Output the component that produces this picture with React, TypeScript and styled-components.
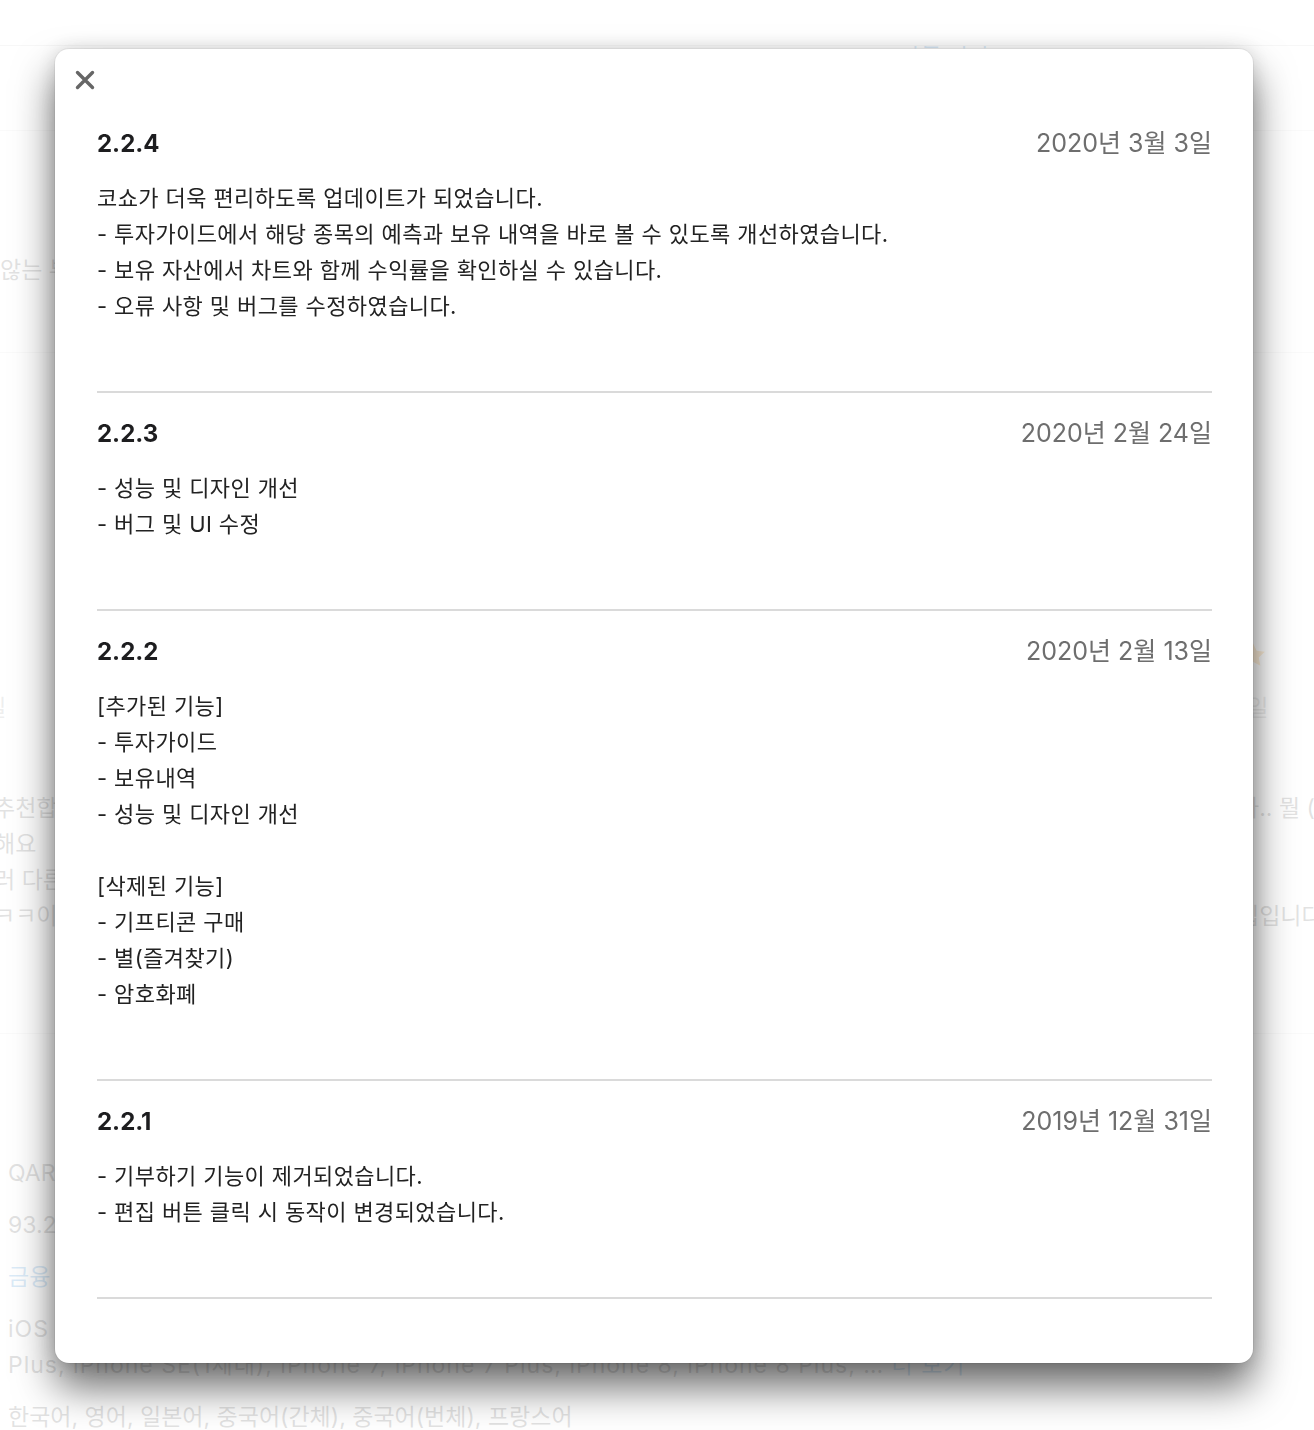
import React from "react";
import styled, { createGlobalStyle } from "styled-components";

const GlobalStyle = createGlobalStyle`
  html, body { margin: 0; padding: 0; background: #fff; }
  body { overflow: hidden; }
  * { box-sizing: border-box; }
`;

/* ---------- background page (dimmed) ---------- */

const Page = styled.div`
  width: 1314px;
  height: 1430px;
  overflow: hidden;
  font-family: Inter, "Noto Sans CJK KR", sans-serif;
  font-size: 23px;
  line-height: 36px;
  color: #333;
`;

const TopBar = styled.header`
  position: relative;
  z-index: 1;
  height: 46px;
  background: #fff;
  border-bottom: 1px solid #c8c8c8;
`;

const VersionStrip = styled.div`
  height: 85px;
  border-bottom: 1px solid #d8d8d8;
  display: flex;
  padding-left: 898px;
`;

const BlueLink = styled.a`
  color: #0070c9;
  text-decoration: none;
`;

const VersionLink = styled(BlueLink)`
  margin-top: -26px;
  height: 36px;
`;

const NoticeBlock = styled.div`
  height: 222px;
  padding-top: 121px;
  border-bottom: 1px solid #d8d8d8;
`;

const ReviewsRow = styled.section`
  height: 681px;
  overflow: hidden;
  border-bottom: 1px solid #d8d8d8;
`;

const ReviewTrack = styled.div`
  display: flex;
  gap: 22px;
  margin-left: -6px;
`;

const ReviewCard = styled.article`
  width: 600px;
  flex-shrink: 0;
  padding-top: 287px;
`;

const StarRow = styled.div<{ $align: string }>`
  height: 30px;
  display: flex;
  gap: 60px;
  justify-content: ${(p) => p.$align};
`;

const DateLine = styled.div<{ $offset: number }>`
  margin-top: 20px;
  height: 36px;
  margin-left: ${(p) => p.$offset}px;
  color: #888;
`;

const ReviewText = styled.p`
  margin: 64px 0 0;
  white-space: pre-line;
`;

const InfoSection = styled.section`
  padding: 121px 0 0 8px;
`;

const InfoRow = styled.div<{ $tracking?: number }>`
  margin-bottom: 16px;
  white-space: nowrap;
  letter-spacing: ${(p) => p.$tracking ?? 0}px;
`;

const Star = () => (
  <svg width="30" height="30" viewBox="0 0 24 24">
    <path
      d="M12 2.5l2.9 6.1 6.6.8-4.9 4.6 1.3 6.6L12 17.3l-5.9 3.3 1.3-6.6-4.9-4.6 6.6-.8z"
      fill="#ff9500"
    />
  </svg>
);

const Stars = () => (
  <>
    <Star />
    <Star />
    <Star />
  </>
);

/* ---------- modal ---------- */

const Overlay = styled.div`
  position: fixed;
  inset: 0;
  z-index: 10;
  background: rgba(255, 255, 255, 0.86);
  display: flex;
  align-items: flex-start;
  padding: 49px 0 0 55px;
`;

const Modal = styled.div`
  width: 1198px;
  background: #fff;
  border-radius: 14px;
  padding-bottom: 64px;
  box-shadow: 0 0 0 1px rgba(0, 0, 0, 0.05), 0 24px 40px rgba(0, 0, 0, 0.58),
    0 0 18px rgba(0, 0, 0, 0.12);
  font-family: Inter, "Noto Sans CJK KR", sans-serif;
  color: #222;
`;

const ModalHeader = styled.div`
  display: flex;
  padding: 13px 0 5px 12px;
`;

const CloseButton = styled.button`
  width: 36px;
  height: 36px;
  padding: 0;
  border: 0;
  background: transparent;
  display: flex;
  align-items: center;
  justify-content: center;
  cursor: pointer;
`;

const NotesList = styled.div`
  padding: 0 41px 0 42px;
`;

const Release = styled.section`
  padding: 25px 0 67px;
  border-bottom: 2px solid #dadada;
`;

const ReleaseHead = styled.div`
  display: flex;
  justify-content: space-between;
  align-items: baseline;
  height: 30px;
  line-height: 30px;
`;

const Version = styled.h3`
  margin: 0;
  font-size: 24px;
  font-weight: 700;
  color: #1d1d1f;
`;

const ReleaseDate = styled.span`
  font-size: 25px;
  font-weight: 400;
  color: #6e6e6e;
`;

const Notes = styled.p`
  margin: 22px 0 0;
  font-size: 22px;
  letter-spacing: 0.4px;
  line-height: 36px;
  white-space: pre-line;
  color: #222;
`;

const CloseIcon = () => (
  <svg width="20" height="20" viewBox="0 0 20 20">
    <path
      d="M2.5 2.5L17.5 17.5M17.5 2.5L2.5 17.5"
      stroke="#666"
      strokeWidth="3.4"
      strokeLinecap="round"
    />
  </svg>
);

const releases = [
  {
    version: "2.2.4",
    date: "2020년 3월 3일",
    lines: [
      "코쇼가 더욱 편리하도록 업데이트가 되었습니다.",
      "- 투자가이드에서 해당 종목의 예측과 보유 내역을 바로 볼 수 있도록 개선하였습니다.",
      "- 보유 자산에서 차트와 함께 수익률을 확인하실 수 있습니다.",
      "- 오류 사항 및 버그를 수정하였습니다.",
    ],
  },
  {
    version: "2.2.3",
    date: "2020년 2월 24일",
    lines: ["- 성능 및 디자인 개선", "- 버그 및 UI 수정"],
  },
  {
    version: "2.2.2",
    date: "2020년 2월 13일",
    lines: [
      "[추가된 기능]",
      "- 투자가이드",
      "- 보유내역",
      "- 성능 및 디자인 개선",
      "",
      "[삭제된 기능]",
      "- 기프티콘 구매",
      "- 별(즐겨찾기)",
      "- 암호화폐",
    ],
  },
  {
    version: "2.2.1",
    date: "2019년 12월 31일",
    lines: ["- 기부하기 기능이 제거되었습니다.", "- 편집 버튼 클릭 시 동작이 변경되었습니다."],
  },
];

export default function App() {
  return (
    <>
      <GlobalStyle />
      <Page>
        <TopBar />
        <VersionStrip>
          <VersionLink>버전 기록</VersionLink>
        </VersionStrip>
        <NoticeBlock>않는 부분이 있을 수 있습니다.</NoticeBlock>
        <ReviewsRow>
          <ReviewTrack>
            <ReviewCard>
              <StarRow $align="flex-end">
                <Stars />
              </StarRow>
              <DateLine $offset={-18}>1일</DateLine>
              <ReviewText>{"추천합니다 정말 좋아요\n해요\n러 다른 앱보다\nㅋㅋ이건 최고"}</ReviewText>
            </ReviewCard>
            <ReviewCard>
              <StarRow $align="flex-start">
                <Stars />
              </StarRow>
              <DateLine $offset={0}>2020년 2월 1일</DateLine>
              <ReviewText>{"좋은 앱입니다.\n잘 쓰고 있어요"}</ReviewText>
            </ReviewCard>
            <ReviewCard>
              <StarRow $align="flex-start">
                <Stars />
              </StarRow>
              <DateLine $offset={0}>1일</DateLine>
              <ReviewText>{"가.. 뭘 (어떻게) 해야 할지\n\n\n팁입니다"}</ReviewText>
            </ReviewCard>
          </ReviewTrack>
        </ReviewsRow>
        <InfoSection>
          <InfoRow>QARA Inc.</InfoRow>
          <InfoRow>93.2MB</InfoRow>
          <InfoRow>
            <BlueLink>금융</BlueLink>
          </InfoRow>
          <InfoRow $tracking={1}>
            iOS 12.0 이상 필요. iPhone 6s, iPhone 6s
            <br />
            Plus, iPhone SE(1세대), iPhone 7, iPhone 7 Plus, iPhone 8, iPhone 8 Plus, …{" "}
            <BlueLink>더 보기</BlueLink>
          </InfoRow>
          <InfoRow>한국어, 영어, 일본어, 중국어(간체), 중국어(번체), 프랑스어</InfoRow>
        </InfoSection>
      </Page>
      <Overlay>
        <Modal role="dialog">
          <ModalHeader>
            <CloseButton aria-label="닫기">
              <CloseIcon />
            </CloseButton>
          </ModalHeader>
          <NotesList>
            {releases.map((r) => (
              <Release key={r.version}>
                <ReleaseHead>
                  <Version>{r.version}</Version>
                  <ReleaseDate>{r.date}</ReleaseDate>
                </ReleaseHead>
                <Notes>{r.lines.join("\n")}</Notes>
              </Release>
            ))}
          </NotesList>
        </Modal>
      </Overlay>
    </>
  );
}
